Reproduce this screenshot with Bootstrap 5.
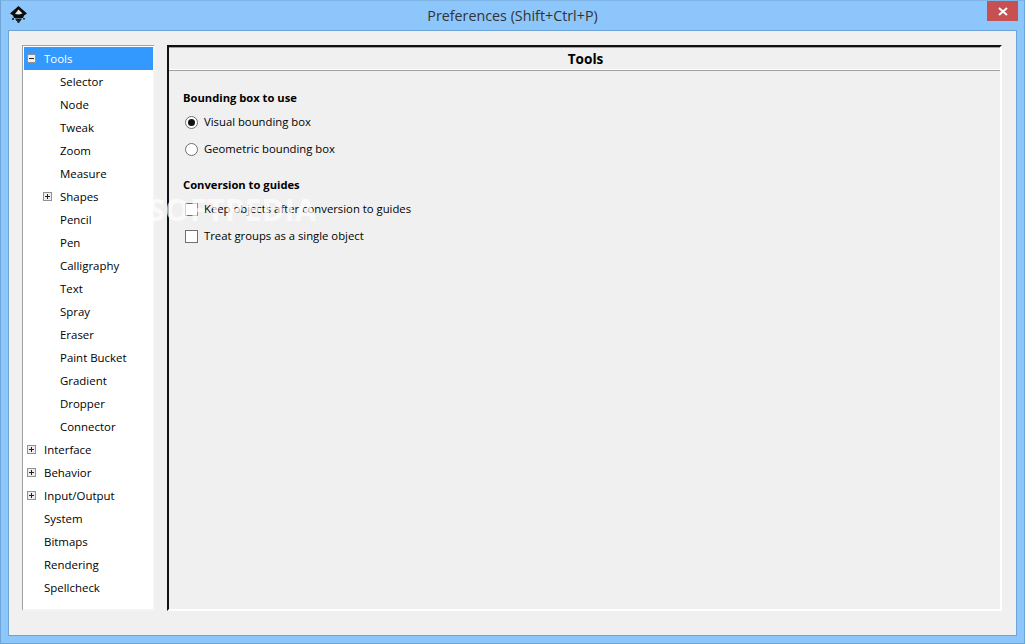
<!DOCTYPE html>
<html lang="en">
<head>
<meta charset="utf-8">
<title>Preferences</title>
<link rel="stylesheet" href="https://cdn.jsdelivr.net/npm/bootstrap@5.3.0/dist/css/bootstrap.min.css">
<style>
html,body{height:100%;margin:0;}
body{background:#8cc6fb;font-family:"Open Sans","Noto Sans",sans-serif;font-size:11.3px;color:#000;overflow:hidden;}
.win-frame{width:1025px;height:644px;border:1px solid #6ea3d6;border-top-color:#7fb4e6;position:relative;}
.win-title{height:29px;position:relative;}
.win-title-text{font-size:14.3px;line-height:30px;color:#333;font-family:"Open Sans",sans-serif;}
.win-logo{position:absolute;left:9px;top:5px;}
.win-close{position:absolute;right:6px;top:0;width:31px;height:20px;background:#c75050;}
.win-client{position:absolute;left:7px;right:7px;top:29px;bottom:7px;background:#f0f0f0;border:1px solid #6ea3d6;padding:14px 14px 24px 13px;gap:12px;}
.side-tree{width:133px;flex:none;background:#fff;border:1px solid #a0a0a0;border-right:2px solid #f4f4f4;border-bottom:2px solid #f4f4f4;padding:1px 0 0 1px;font-size:11.45px;}
.tree-row{height:23px;line-height:23px;white-space:nowrap;}
.tree-row.sel{background:#3399ff;color:#fff;}
.tree-top{padding-left:20px;position:relative;}
.tree-sub{padding-left:36px;position:relative;}
.tree-box{position:absolute;top:7px;width:9px;height:9px;border:1px solid #919191;background:#eee;}
.tree-top .tree-box{left:3px;}
.tree-sub .tree-box{left:19px;}
.tree-box::before{content:"";position:absolute;left:1px;right:1px;top:3px;height:1px;background:#222;}
.tree-box.plus::after{content:"";position:absolute;top:1px;bottom:1px;left:3px;width:1px;background:#222;}
.main-pane{flex:1;border-top:2px solid #111;border-left:2px solid #111;border-right:2px solid #fff;border-bottom:2px solid #fff;position:relative;box-shadow:inset 0 1px 0 #a0a0a0;}
.pane-head{height:24px;line-height:24px;padding-left:2px;text-align:center;font-weight:700;font-size:13.6px;border-bottom:1px solid #a0a0a0;box-shadow:0 -1px 0 #fff inset;}
.pane-body{padding:19px 0 0 14px;}
.grp-title{font-weight:700;line-height:16px;height:16px;margin-bottom:3px;font-size:11.2px;}
.grp-second{margin-top:14px;margin-bottom:3px;}
.opt-row{height:27px;padding-left:2px;gap:6px;}
.opt-radio{width:13px;height:13px;border:1px solid #707070;border-radius:50%;background:#fff;position:relative;flex:none;}
.opt-radio.on::after{content:"";position:absolute;left:2px;top:2px;width:7px;height:7px;border-radius:50%;background:#111;}
.opt-check{width:13px;height:13px;border:1px solid #707070;background:#fff;flex:none;}
.wm-text{position:absolute;left:147px;top:191px;font-size:31px;font-weight:700;color:rgba(255,255,255,.7);pointer-events:none;line-height:34px;}
</style>
</head>
<body>
<div class="win-frame">
  <div class="win-title text-center">
    <svg class="win-logo" width="18" height="18" viewBox="0 0 18 18"><path d="M8.5 0 L17 7.5 L14 9.5 L13 12 H4 L3 9.5 L0 7.5Z" fill="#0c0c0c"/><path d="M8.5 3.5 L12.5 7.5 L9 8.5 L5 8 Z" fill="#dfe6ee"/><path d="M5 12.5h7l-1.5 2.5h-4z" fill="#1a1a1a"/><path d="M7 15h3l-.7 2H7.7z" fill="#222"/><rect x="2" y="12" width="2" height="2" fill="#333"/><rect x="13" y="12" width="2" height="1.5" fill="#333"/></svg>
    <div class="win-title-text">Preferences (Shift+Ctrl+P)</div>
    <div class="win-close d-flex align-items-center justify-content-center">
      <svg width="10" height="9" viewBox="0 0 10 9"><path d="M1 1 L9 8 M9 1 L1 8" stroke="#fff" stroke-width="2" fill="none"/></svg>
    </div>
  </div>
  <div class="win-client d-flex">
    <div class="side-tree">
      <div class="tree-row tree-top sel"><span class="tree-box"></span>Tools</div>
      <div class="tree-row tree-sub">Selector</div>
      <div class="tree-row tree-sub">Node</div>
      <div class="tree-row tree-sub">Tweak</div>
      <div class="tree-row tree-sub">Zoom</div>
      <div class="tree-row tree-sub">Measure</div>
      <div class="tree-row tree-sub"><span class="tree-box plus"></span>Shapes</div>
      <div class="tree-row tree-sub">Pencil</div>
      <div class="tree-row tree-sub">Pen</div>
      <div class="tree-row tree-sub">Calligraphy</div>
      <div class="tree-row tree-sub">Text</div>
      <div class="tree-row tree-sub">Spray</div>
      <div class="tree-row tree-sub">Eraser</div>
      <div class="tree-row tree-sub">Paint Bucket</div>
      <div class="tree-row tree-sub">Gradient</div>
      <div class="tree-row tree-sub">Dropper</div>
      <div class="tree-row tree-sub">Connector</div>
      <div class="tree-row tree-top"><span class="tree-box plus"></span>Interface</div>
      <div class="tree-row tree-top"><span class="tree-box plus"></span>Behavior</div>
      <div class="tree-row tree-top"><span class="tree-box plus"></span>Input/Output</div>
      <div class="tree-row tree-top">System</div>
      <div class="tree-row tree-top">Bitmaps</div>
      <div class="tree-row tree-top">Rendering</div>
      <div class="tree-row tree-top">Spellcheck</div>
    </div>
    <div class="main-pane">
      <div class="pane-head">Tools</div>
      <div class="pane-body">
        <div class="grp-title">Bounding box to use</div>
        <div class="opt-row d-flex align-items-center"><span class="opt-radio on"></span><span>Visual bounding box</span></div>
        <div class="opt-row d-flex align-items-center"><span class="opt-radio"></span><span>Geometric bounding box</span></div>
        <div class="grp-title grp-second">Conversion to guides</div>
        <div class="opt-row d-flex align-items-center"><span class="opt-check"></span><span>Keep objects after conversion to guides</span></div>
        <div class="opt-row d-flex align-items-center"><span class="opt-check"></span><span>Treat groups as a single object</span></div>
      </div>
    </div>
  </div>
  <div class="wm-text">SOFTPEDIA</div>
</div>
<script src="https://cdn.jsdelivr.net/npm/bootstrap@5.3.0/dist/js/bootstrap.bundle.min.js"></script>
</body>
</html>
